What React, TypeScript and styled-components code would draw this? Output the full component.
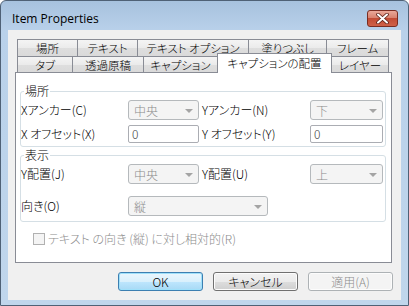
import styled, { createGlobalStyle } from "styled-components";

const GlobalStyle = createGlobalStyle`
  html, body {
    margin: 0;
    padding: 0;
    background: #ffffff;
  }
  body {
    font-family: "Noto Sans CJK JP", "Liberation Sans", sans-serif;
    font-size: 12px;
    font-weight: 300;
    font-feature-settings: "palt" 1;
  }
`;

const Window = styled.div`
  width: 409px;
  height: 306px;
  box-sizing: border-box;
  border: 1px solid #4f6176;
  border-radius: 6px 6px 0 0;
  background: linear-gradient(#a7c2de, #b9d1ea 30px, #c0d6ec);
  display: flex;
  flex-direction: column;
`;

const TitleBar = styled.div`
  height: 29px;
  box-sizing: border-box;
  padding: 9px 10px 0 11px;
  display: flex;
  justify-content: space-between;
  align-items: flex-start;
`;

const Title = styled.span`
  font-family: "Open Sans", "Noto Sans", sans-serif;
  font-size: 12px;
  font-weight: 400;
  line-height: 17px;
  color: #000;
`;

const CloseButton = styled.div`
  width: 31px;
  height: 17px;
  box-sizing: border-box;
  border: 1px solid #7a2d22;
  border-radius: 3px;
  background: linear-gradient(#e9a899, #d9826f 45%, #c24c35 50%, #cf6148);
  display: flex;
  align-items: center;
  justify-content: center;
`;

const Client = styled.div`
  margin: 0 7px;
  height: 270px;
  background: #f0f0f0;
  box-sizing: border-box;
  padding: 9px 8px 0 7px;
  display: flex;
  flex-direction: column;
`;

const TabRow = styled.div`
  display: flex;
  align-items: flex-start;
  margin-left: 2px;
`;

const Tab = styled.div<{ $w: number; $active?: boolean; $h: number }>`
  width: ${(p) => p.$w}px;
  height: ${(p) => (p.$active ? p.$h + 4 : p.$h)}px;
  margin-right: -1px;
  margin-top: ${(p) => (p.$active ? -3 : 0)}px;
  margin-bottom: ${(p) => (p.$active ? -1 : 0)}px;
  box-sizing: border-box;
  border: 1px solid #898c95;
  border-bottom: none;
  background: ${(p) =>
    p.$active ? "#ffffff" : "linear-gradient(#f4f4f4, #ebebeb 50%, #dedede 51%, #dadada)"};
  position: relative;
  z-index: ${(p) => (p.$active ? 2 : 1)};
  display: flex;
  justify-content: center;
  align-items: ${(p) => (p.$active ? "flex-start" : "center")};
  padding-top: ${(p) => (p.$active ? 2 : 0)}px;
  font-size: 11.5px;
  line-height: 14px;
  color: #000;
  white-space: nowrap;
`;

const Panel = styled.div`
  width: 377px;
  height: 191px;
  box-sizing: border-box;
  border: 1px solid #898c95;
  background: #ffffff;
  padding: 11px 5px 0 4px;
  display: flex;
  flex-direction: column;
`;

const Group = styled.fieldset<{ $pad: number; $gap: number }>`
  margin: 0;
  padding: 2px 2px ${(p) => p.$pad}px 0;
  border: 1px solid #d5dfe5;
  border-radius: 3px;
  display: grid;
  grid-template-columns: 107px 71px 111px 73px;
  row-gap: ${(p) => p.$gap}px;
  align-items: center;
  min-width: 0;
  & + & {
    margin-top: 1px;
  }
`;

const Legend = styled.legend`
  margin-left: 3px;
  padding: 0 1px;
  line-height: 14px;
  color: #000;
`;

const Label = styled.span<{ $indent?: boolean }>`
  padding-left: ${(p) => (p.$indent ? 3 : 0)}px;
  line-height: 14px;
  color: #000;
  white-space: nowrap;
`;

const Combo = styled.div<{ $w?: number }>`
  width: ${(p) => (p.$w ? `${p.$w}px` : "100%")};
  height: 20px;
  box-sizing: border-box;
  border: 1px solid #b5b9bc;
  border-radius: 3px;
  background: #f4f4f4;
  display: flex;
  align-items: center;
  justify-content: space-between;
  padding: 0 5px 0 5px;
  color: #8a8a8a;
  grid-column: span ${(p) => (p.$w ? 2 : 1)};
  justify-self: start;
`;

const Arrow = styled.span`
  width: 0;
  height: 0;
  border-left: 4px solid transparent;
  border-right: 4px solid transparent;
  border-top: 4px solid #a4a4a4;
  margin-top: 1px;
`;

const TextBox = styled.div`
  height: 18px;
  box-sizing: border-box;
  border: 1px solid #abadb3;
  border-radius: 2px;
  background: #ffffff;
  padding-left: 3px;
  line-height: 16px;
  color: #444;
`;

const CheckRow = styled.div`
  margin: 8px 0 0 13px;
  display: flex;
  align-items: center;
  gap: 3px;
  color: #8d8d8d;
`;

const CheckBox = styled.span`
  width: 12px;
  height: 12px;
  box-sizing: border-box;
  border: 1px solid #b1b1b1;
  background: #f4f4f4;
`;

const ButtonRow = styled.div`
  margin-top: 9px;
  display: flex;
  justify-content: flex-end;
  gap: 10px;
`;

const Button = styled.div<{ $kind: "default" | "normal" | "disabled" }>`
  width: 85px;
  height: 19px;
  box-sizing: border-box;
  border-radius: 3px;
  display: flex;
  align-items: center;
  justify-content: center;
  border: 1px solid
    ${(p) => (p.$kind === "default" ? "#3c7fb1" : p.$kind === "normal" ? "#707070" : "#adb2b5")};
  background: ${(p) =>
    p.$kind === "default"
      ? "linear-gradient(#eaf6fd, #d9f0fc 50%, #bee6fd 51%, #a7d9f5)"
      : p.$kind === "normal"
      ? "linear-gradient(#f2f2f2, #ebebeb 50%, #dddddd 51%, #cfcfcf)"
      : "#f4f4f4"};
  box-shadow: ${(p) => (p.$kind === "default" ? "inset 0 0 0 1px #9fe0fa" : "inset 0 0 0 1px #fcfcfc")};
  color: ${(p) => (p.$kind === "disabled" ? "#8d8d8d" : "#000")};
  line-height: 14px;
`;

const row1 = [
  { t: "場所", w: 61 },
  { t: "テキスト", w: 61 },
  { t: "テキスト オプション", w: 112 },
  { t: "塗りつぶし", w: 79 },
  { t: "フレーム", w: 63 },
];

const row2 = [
  { t: "タブ", w: 56 },
  { t: "透過原稿", w: 72 },
  { t: "キャプション", w: 75 },
  { t: "キャプションの配置", w: 115, active: true },
  { t: "レイヤー", w: 58 },
];

export default function App() {
  return (
    <>
      <GlobalStyle />
      <Window>
        <TitleBar>
          <Title>Item Properties</Title>
          <CloseButton>
            <svg width="13" height="11" viewBox="0 0 13 11">
              <path
                d="M2 1.5 L11 9.5 M11 1.5 L2 9.5"
                stroke="#5a1f16"
                strokeWidth="3.6"
                strokeLinecap="round"
              />
              <path
                d="M2 1.5 L11 9.5 M11 1.5 L2 9.5"
                stroke="#ffffff"
                strokeWidth="2"
                strokeLinecap="round"
              />
            </svg>
          </CloseButton>
        </TitleBar>
        <Client>
          <TabRow>
            {row1.map((t) => (
              <Tab key={t.t} $w={t.w} $h={17}>
                {t.t}
              </Tab>
            ))}
          </TabRow>
          <TabRow>
            {row2.map((t) => (
              <Tab key={t.t} $w={t.w} $h={16} $active={t.active}>
                {t.t}
              </Tab>
            ))}
          </TabRow>
          <Panel>
            <Group $pad={3} $gap={5}>
              <Legend>場所</Legend>
              <Label>Xアンカー(C)</Label>
              <Combo>
                中央
                <Arrow />
              </Combo>
              <Label $indent>Yアンカー(N)</Label>
              <Combo>
                下
                <Arrow />
              </Combo>
              <Label>X オフセット(X)</Label>
              <TextBox>0</TextBox>
              <Label $indent>Y オフセット(Y)</Label>
              <TextBox>0</TextBox>
            </Group>
            <Group $pad={5} $gap={12}>
              <Legend>表示</Legend>
              <Label>Y配置(J)</Label>
              <Combo>
                中央
                <Arrow />
              </Combo>
              <Label $indent>Y配置(U)</Label>
              <Combo>
                上
                <Arrow />
              </Combo>
              <Label>向き(O)</Label>
              <Combo $w={140}>
                縦
                <Arrow />
              </Combo>
            </Group>
            <CheckRow>
              <CheckBox />
              テキスト の向き (縦) に対し相対的(R)
            </CheckRow>
          </Panel>
          <ButtonRow>
            <Button $kind="default">OK</Button>
            <Button $kind="normal">キャンセル</Button>
            <Button $kind="disabled">適用(A)</Button>
          </ButtonRow>
        </Client>
      </Window>
    </>
  );
}
